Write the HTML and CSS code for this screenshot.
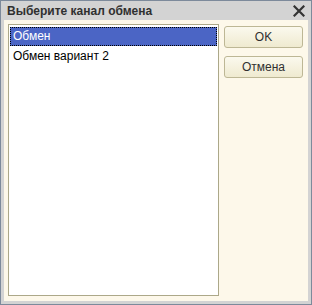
FILE: index.html
```html
<!DOCTYPE html>
<html>
<head>
<meta charset="utf-8">
<link rel="stylesheet" href="styles.css">
</head>
<body>
<div class="window">
  <div class="titlebar">
    <span class="title">Выберите канал обмена</span>
    <svg class="close" width="12" height="12" viewBox="0 0 12 12"><path d="M1.5 1.5 L10.5 10.5 M10.5 1.5 L1.5 10.5" stroke="#333" stroke-width="2.2" stroke-linecap="square"/></svg>
  </div>
  <div class="content">
    <div class="list">
      <div class="item selected">Обмен</div>
      <div class="item">Обмен вариант 2</div>
    </div>
    <div class="buttons">
      <button class="btn">OK</button>
      <button class="btn">Отмена</button>
    </div>
  </div>
</div>
</body>
</html>
```
FILE: styles.css
```css
html, body {
  margin: 0;
  padding: 0;
  width: 312px;
  height: 305px;
  overflow: hidden;
  background: #ffffff;
}
.window {
  box-sizing: border-box;
  width: 312px;
  height: 305px;
  border: 1px solid #7d8a9b;
  background: #d3d3d3;
  padding: 0 3px 3px 3px;
  display: flex;
  flex-direction: column;
  font-family: "Liberation Sans", Arial, sans-serif;
}
.titlebar {
  height: 19px;
  display: flex;
  align-items: center;
  justify-content: space-between;
  padding: 0 3px 0 3px;
}
.title {
  font-weight: bold;
  font-size: 12px;
  color: #303030;
}
.close {
  display: block;
}
.content {
  flex: 1;
  background: #fdf8ea;
  display: flex;
  padding: 4px 5px 5px 4px;
  gap: 5px;
}
.list {
  box-sizing: border-box;
  width: 211px;
  background: #ffffff;
  border: 1px solid #aca889;
  padding: 2px 1px 1px 1px;
}
.item {
  height: 19px;
  line-height: 19px;
  margin-bottom: 1px;
  padding-left: 3px;
  font-size: 12px;
  color: #000;
}
.item.selected {
  background: #4b65c5;
  color: #ffffff;
  outline: 1px dotted #000;
  outline-offset: -1px;
}
.buttons {
  display: flex;
  flex-direction: column;
  gap: 8px;
  padding-top: 2px;
  flex: 1;
}
.btn {
  box-sizing: border-box;
  width: 79px;
  height: 22px;
  border: 1px solid #bdb795;
  border-radius: 3px;
  background: linear-gradient(#fbf9ee, #efead0);
  font-family: "Liberation Sans", Arial, sans-serif;
  font-size: 12px;
  color: #303030;
  padding: 0;
}
```
